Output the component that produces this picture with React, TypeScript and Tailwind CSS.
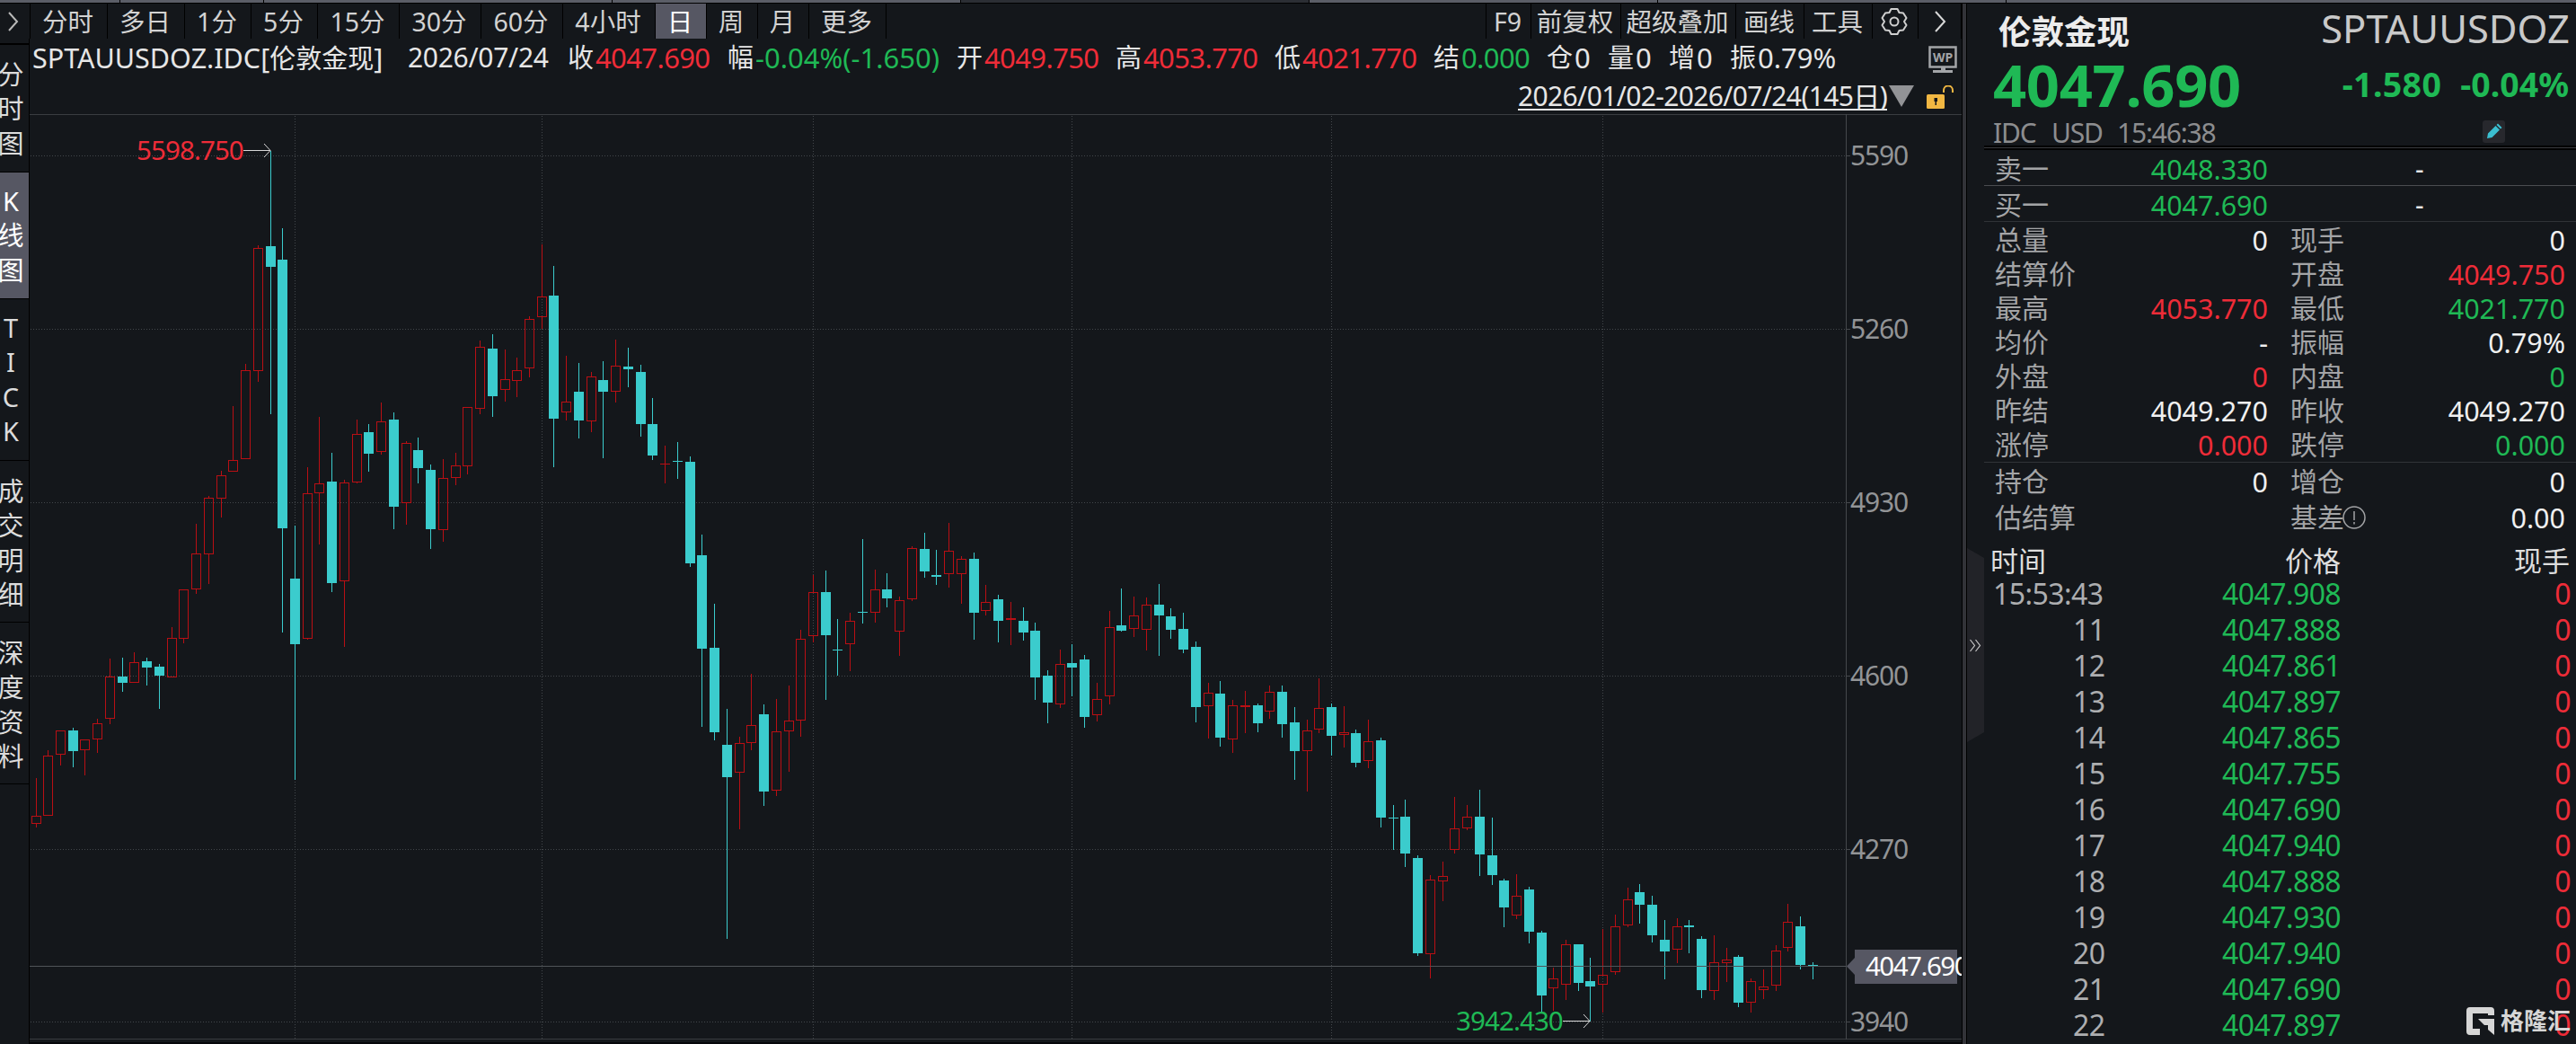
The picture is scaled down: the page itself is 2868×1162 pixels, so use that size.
import { ReactNode } from 'react'

type Candle = [dir: 'u' | 'd', high: number, top: number, bottom: number, low: number]

const RED = '#b90f14'
const CYAN = '#3bcccd'
const GRID = '#43474b'

// u = rising (hollow red), d = falling (solid cyan)
const candles: Candle[] = [
  ['u', 866, 908, 916, 921], ['u', 835, 841, 907, 907], ['u', 813, 813, 839, 852], ['d', 810, 813, 836, 854],
  ['u', 823, 823, 834, 863], ['u', 800, 805, 822, 838], ['u', 733, 753, 799, 806], ['d', 732, 753, 760, 770],
  ['u', 726, 737, 759, 759], ['d', 732, 736, 743, 763], ['d', 739, 742, 752, 789], ['u', 698, 710, 753, 753],
  ['u', 656, 656, 710, 716], ['u', 583, 616, 655, 661], ['u', 552, 554, 616, 650], ['u', 524, 529, 554, 576],
  ['u', 452, 512, 524, 524], ['u', 405, 412, 510, 510], ['u', 273, 276, 412, 425], ['d', 168, 274, 297, 461],
  ['d', 254, 289, 588, 704], ['d', 585, 644, 717, 868], ['u', 520, 549, 710, 712], ['u', 464, 538, 548, 606],
  ['d', 504, 536, 649, 659], ['u', 534, 537, 646, 720], ['u', 467, 483, 536, 538], ['d', 472, 481, 505, 525],
  ['u', 448, 469, 502, 506], ['d', 459, 467, 564, 589], ['u', 491, 493, 559, 584], ['d', 487, 501, 521, 538],
  ['d', 517, 523, 589, 611], ['u', 511, 532, 589, 603], ['u', 504, 518, 531, 540], ['u', 453, 453, 518, 528],
  ['u', 379, 386, 454, 461], ['d', 372, 388, 441, 464], ['u', 389, 422, 433, 447], ['u', 398, 412, 423, 442],
  ['u', 352, 355, 409, 420], ['u', 272, 330, 352, 366], ['d', 296, 329, 466, 520], ['u', 396, 447, 458, 468],
  ['d', 404, 436, 468, 488], ['u', 414, 419, 468, 481], ['d', 402, 423, 436, 510], ['u', 378, 407, 435, 448],
  ['d', 387, 408, 411, 431], ['d', 406, 414, 472, 486], ['d', 443, 472, 507, 512], ['u', 496, 516, 516, 538],
  ['d', 492, 513, 513, 533], ['d', 508, 514, 627, 631], ['d', 595, 618, 722, 809], ['d', 672, 721, 815, 824],
  ['d', 789, 829, 865, 1045], ['u', 820, 827, 859, 923], ['u', 750, 807, 826, 835], ['d', 784, 795, 881, 897],
  ['u', 778, 814, 879, 886], ['u', 763, 802, 813, 859], ['u', 701, 711, 801, 820], ['u', 640, 659, 707, 715],
  ['d', 635, 659, 707, 779], ['d', 689, 723, 723, 752], ['u', 682, 691, 716, 747], ['d', 600, 681, 681, 694],
  ['u', 634, 656, 681, 693], ['d', 638, 656, 666, 676], ['u', 664, 668, 702, 730], ['u', 608, 610, 666, 669],
  ['d', 593, 611, 636, 643], ['d', 612, 640, 642, 651], ['u', 582, 613, 638, 654], ['u', 619, 622, 638, 672],
  ['d', 615, 622, 682, 712], ['u', 651, 670, 679, 685], ['d', 662, 667, 691, 715], ['u', 670, 688, 689, 718],
  ['d', 676, 691, 704, 713], ['d', 693, 702, 754, 779], ['d', 746, 752, 782, 805], ['u', 723, 739, 783, 788],
  ['d', 717, 738, 743, 775], ['d', 729, 734, 798, 810], ['u', 760, 778, 795, 803], ['u', 680, 698, 774, 784],
  ['d', 655, 696, 702, 703], ['u', 664, 685, 699, 709], ['u', 665, 673, 700, 724], ['d', 650, 673, 685, 730],
  ['d', 677, 686, 701, 711], ['d', 682, 700, 723, 727], ['d', 714, 720, 787, 804], ['u', 760, 771, 785, 822],
  ['d', 758, 772, 821, 831], ['u', 779, 785, 822, 838], ['u', 769, 785, 786, 816], ['d', 783, 785, 805, 815],
  ['u', 763, 770, 791, 800], ['d', 763, 770, 806, 821], ['d', 787, 804, 836, 868], ['u', 801, 813, 835, 881],
  ['u', 755, 788, 811, 816], ['d', 783, 787, 819, 841], ['u', 786, 815, 817, 832], ['d', 812, 816, 849, 854],
  ['u', 801, 825, 846, 855], ['d', 821, 824, 910, 921], ['d', 896, 910, 910, 946], ['d', 890, 909, 950, 965],
  ['d', 952, 955, 1061, 1064], ['u', 974, 979, 1061, 1089], ['u', 959, 975, 980, 1003], ['u', 887, 922, 945, 950],
  ['u', 896, 909, 921, 924], ['d', 879, 909, 951, 975], ['d', 910, 952, 974, 985], ['d', 978, 980, 1010, 1032],
  ['u', 973, 997, 1018, 1023], ['d', 987, 990, 1037, 1050], ['d', 1036, 1038, 1108, 1127], ['u', 1077, 1089, 1099, 1125],
  ['u', 1046, 1051, 1095, 1113], ['d', 1051, 1051, 1094, 1103], ['d', 1066, 1092, 1098, 1137], ['u', 1034, 1085, 1095, 1127],
  ['u', 1018, 1031, 1081, 1085], ['u', 988, 1001, 1029, 1032], ['d', 984, 993, 1007, 1028], ['d', 997, 1007, 1041, 1049],
  ['d', 1024, 1046, 1059, 1090], ['u', 1022, 1031, 1056, 1072], ['d', 1024, 1030, 1032, 1061], ['d', 1042, 1045, 1102, 1111],
  ['u', 1041, 1071, 1102, 1113], ['u', 1055, 1068, 1071, 1093], ['d', 1063, 1065, 1116, 1121], ['u', 1089, 1092, 1115, 1127],
  ['u', 1079, 1098, 1101, 1112], ['u', 1052, 1058, 1096, 1103], ['u', 1006, 1026, 1054, 1059], ['d', 1020, 1031, 1074, 1079],
  ['d', 1071, 1074, 1074, 1090],
]

const yLabels = [
  { y: 173, label: '5590' },
  { y: 366, label: '5260' },
  { y: 559, label: '4930' },
  { y: 752, label: '4600' },
  { y: 945, label: '4270' },
  { y: 1137, label: '3940' },
]
const monthLines = [328, 603, 905, 1193, 1482, 1784]

const sideTabs = [
  { text: '分时图', cls: 'h-[142px] pt-[14px]' },
  { text: 'K线图', cls: 'h-[141px] pt-[13px] bg-[#565763] text-white' },
  { text: 'TICK', cls: 'h-[180px] pt-[13px]' },
  { text: '成交明细', cls: 'h-[180px] pt-[15px]' },
  { text: '深度资料', cls: 'h-[180px] pt-[15px]' },
]

const ticks = [
  ['15:53:43', '4047.908'],
  ['11', '4047.888'],
  ['12', '4047.861'],
  ['13', '4047.897'],
  ['14', '4047.865'],
  ['15', '4047.755'],
  ['16', '4047.690'],
  ['17', '4047.940'],
  ['18', '4047.888'],
  ['19', '4047.930'],
  ['20', '4047.940'],
  ['21', '4047.690'],
  ['22', '4047.897'],
]

function Tab({ w, active, children }: { w: string; active?: boolean; children?: ReactNode }) {
  return (
    <div
      className={`${w} h-[39px] shrink-0 pr-[2px] flex items-center justify-center border-r border-black ${
        active ? 'bg-[#565763] text-white' : ''
      }`}
    >
      {children}
    </div>
  )
}

function Info({ w, label, value, color = 'text-[#e6e6e6]', track = 'tracking-[-0.02em]' }: {
  w: string
  label: string
  value: string
  color?: string
  track?: string
}) {
  return (
    <div className={`${w} shrink-0 flex text-[#e6e6e6]`}>
      <span className="w-[31px] text-[29px]">{label}</span>
      <span className={`text-[31px] ${track} ${color}`}>{value}</span>
    </div>
  )
}

function Stat({ h = 'h-[38px]', left, lv = '', lc = 'text-[#f0f0f0]', right, rv, rc = 'text-[#f0f0f0]' }: {
  h?: string
  left: string
  lv?: string
  lc?: string
  right: ReactNode
  rv: string
  rc?: string
}) {
  return (
    <div className={`${h} pt-[2px] flex items-center pl-[12px] pr-[12px] text-[30px] leading-[38px] text-[#a3a4a6]`}>
      <span>{left}</span>
      <span className={`ml-auto text-[30.5px] ${lc}`}>{lv}</span>
      <div className="w-[331px] shrink-0 pl-[25px] flex items-center justify-between">
        <span className="flex items-center">{right}</span>
        <span className={`text-[30.5px] ${rc}`}>{rv}</span>
      </div>
    </div>
  )
}

function Chart() {
  return (
    <svg className="block" width="2151" height="1035" viewBox="33 127 2151 1035" shapeRendering="crispEdges">
      {/* frame */}
      <rect x="33" y="127" width="2151" height="1" fill="#3a3d41" />
      <rect x="33" y="1156" width="2151" height="1" fill="#3a3d41" />
      <rect x="33" y="1160" width="2151" height="2" fill="#06070a" />
      <rect x="2055" y="127" width="1" height="1030" fill="#45484c" />

      {yLabels.map(({ y, label }) => (
        <g key={label}>
          <line x1="34" x2="2055" y1={y + 0.5} y2={y + 0.5} stroke={GRID} strokeDasharray="1 2" />
          <line x1="2056" x2="2060" y1={y + 0.5} y2={y + 0.5} stroke="#45484c" />
          <text x="2060" y={y + 11} fontSize="30" letterSpacing="-1.2" fill="#929496">{label}</text>
        </g>
      ))}
      {monthLines.map((x) => (
        <line key={x} x1={x + 0.5} x2={x + 0.5} y1="129" y2="1156" stroke={GRID} strokeDasharray="1 2" />
      ))}

      {candles.map(([dir, high, top, bottom, low], i) => {
        const x = Math.floor(40 + i * 13.738)
        if (dir === 'd') {
          return (
            <g key={i} fill={CYAN}>
              <rect x={x} y={high} width="1" height={low - high} />
              <rect x={x - 5} y={top} width="11" height={Math.max(bottom - top, 1)} />
            </g>
          )
        }
        return (
          <g key={i} fill={RED}>
            <rect x={x} y={high} width="1" height={top - high} />
            <rect x={x} y={bottom} width="1" height={low - bottom} />
            <rect x={x - 5} y={top} width="11" height="1" />
            <rect x={x - 5} y={bottom} width="11" height="1" />
            <rect x={x - 5} y={top} width="1" height={bottom - top} />
            <rect x={x + 5} y={top} width="1" height={bottom - top} />
          </g>
        )
      })}

      {/* high / low marks */}
      <text x="152" y="178" fontSize="29.5" letterSpacing="-0.9" fill="#ee2c38">5598.750</text>
      <path d="M271 167.5H301M294 160l7 7.5-7 7.5" fill="none" stroke="#d8d8d8" shapeRendering="auto" />
      <text x="1621" y="1147" fontSize="29.5" letterSpacing="-0.9" fill="#1fb955">3942.430</text>
      <path d="M1740 1136.5H1770M1763 1129l7 7.5-7 7.5" fill="none" stroke="#d8d8d8" shapeRendering="auto" />

      {/* last price */}
      <rect x="33" y="1075" width="2022" height="1" fill="#505458" />
      <path d="M2056 1075.5L2065 1066V1057H2179V1095H2065V1085Z" fill="#565763" shapeRendering="auto" />
      <text x="2077" y="1086" fontSize="29.5" letterSpacing="-1.5" fill="#fff">4047.690</text>
    </svg>
  )
}

function ChartPane() {
  return (
    <div className="w-[2184px] shrink-0 flex flex-col overflow-hidden">
      {/* period tabs */}
      <div className="h-[39px] flex text-[28.5px] leading-[36px] text-[#d2d2d2]">
        <Tab w="w-[34px]">
          <svg className="ml-[-2px]" width="14" height="24" viewBox="0 0 14 24" fill="none" stroke="#b8b8b8" strokeWidth="2">
            <path d="M2 2l9 10-9 10" />
          </svg>
        </Tab>
        <Tab w="w-[86px]">分时</Tab>
        <Tab w="w-[86px]">多日</Tab>
        <Tab w="w-[74px]">1分</Tab>
        <Tab w="w-[74px]">5分</Tab>
        <Tab w="w-[91px]">15分</Tab>
        <Tab w="w-[91px]">30分</Tab>
        <Tab w="w-[91px]">60分</Tab>
        <Tab w="w-[103px]">4小时</Tab>
        <Tab w="w-[57px]" active>日</Tab>
        <Tab w="w-[57px]">周</Tab>
        <Tab w="w-[57px]">月</Tab>
        <Tab w="w-[86px]">更多</Tab>
        <div className="flex-1 border-r border-black" />
        <Tab w="w-[50px]">F9</Tab>
        <Tab w="w-[100px]">前复权</Tab>
        <Tab w="w-[128px]">超级叠加</Tab>
        <Tab w="w-[76px]">画线</Tab>
        <Tab w="w-[76px]">工具</Tab>
        <Tab w="w-[51px]">
          <svg width="32" height="32" viewBox="0 0 32 32" fill="none" stroke="#cfcfcf" strokeWidth="2" strokeLinejoin="round">
            <path d="M12.5 2h7l2 4 4.500.5 3.500 5.500-2.500 4 2.500 4-3.500 5.500-4.500.5-2 4h-7l-2-4-4.500-.5-3.500-5.500 2.500-4-2.500-4 3.500-5.500 4.500-.5z" />
            <circle cx="16" cy="16" r="4.500" />
          </svg>
        </Tab>
        <Tab w="w-[48px]">
          <svg className="ml-[2px]" width="14" height="24" viewBox="0 0 14 24" fill="none" stroke="#d8d8d8" strokeWidth="2">
            <path d="M2 1l10 11-10 11" />
          </svg>
        </Tab>
      </div>

      <div className="flex">
        {/* side tabs */}
        <div className="w-[33px] h-[1119px] shrink-0 pt-[5px] border-r border-black text-[29px] leading-[38.3px] text-[#dcdcdc]">
          <div className="border-t-2 border-black" />
          {sideTabs.map(({ text, cls }) => (
            <div key={text} className={`${cls} border-b border-black flex flex-col`}>
              {[...text].map((ch, i) => (
                <div key={i} className="w-[24px] flex justify-center">
                  <span>{ch}</span>
                </div>
              ))}
            </div>
          ))}
        </div>

        <div className="w-[2151px] flex flex-col">
          {/* quote line */}
          <div className="h-[42px] pl-[3px] flex leading-[42px]">
            <div className="w-[418px] shrink-0 text-[#e6e6e6]">
              <span className="text-[30.5px]">SPTAUUSDOZ.IDC[</span>
              <span className="text-[29px]">伦敦金现</span>
              <span className="text-[30.5px]">]</span>
            </div>
            <div className="w-[178px] shrink-0 text-[30px] tracking-[-0.01em] text-[#e6e6e6]">2026/07/24</div>
            <Info w="w-[178px]" label="收" value="4047.690" color="text-[#ee2c38]" />
            <Info w="w-[255px]" label="幅" value="-0.04%(-1.650)" color="text-[#1fb955]" track="tracking-[0em]" />
            <Info w="w-[177px]" label="开" value="4049.750" color="text-[#ee2c38]" />
            <Info w="w-[177px]" label="高" value="4053.770" color="text-[#ee2c38]" />
            <Info w="w-[177px]" label="低" value="4021.770" color="text-[#ee2c38]" />
            <Info w="w-[126px]" label="结" value="0.000" color="text-[#1fb955]" />
            <Info w="w-[68px]" label="仓" value="0" />
            <Info w="w-[68px]" label="量" value="0" />
            <Info w="w-[68px]" label="增" value="0" />
            <Info w="w-[221px]" label="振" value="0.79%" track="tracking-[0em]" />
            <svg className="mt-[8px] shrink-0" width="32" height="31" viewBox="0 0 32 31">
              <path d="M1.500 1.500h29v22h-29z" fill="none" stroke="#a3a5a8" strokeWidth="2.500" />
              <path d="M14 24h5v3h8v3H5v-3h9z" fill="#a3a5a8" />
              <text x="16" y="17.500" fontSize="14" fontWeight="700" textAnchor="middle" fill="#a3a5a8">WP</text>
            </svg>
          </div>

          {/* date range */}
          <div className="h-[42px] pr-[9px] flex justify-end items-start">
            <div className="mt-[3px] h-[35px] border-b-2 border-[#e6e6e6] text-[30px] leading-[38px] tracking-[-0.0215em] text-[#e6e6e6]">
              2026/01/02-2026/07/24(145日)
            </div>
            <svg className="ml-[2px] mt-[10px]" width="28" height="24" viewBox="0 0 28 24">
              <path d="M0 0h28L14 24z" fill="#929396" />
            </svg>
            <svg className="ml-[14px] mt-[10px]" width="30" height="26" viewBox="0 0 30 26">
              <rect x="0" y="10" width="20" height="16" rx="1.500" fill="#f1b742" />
              <path d="M19 8V5.500a5 5 0 0 1 10 0V8" fill="none" stroke="#f1b742" strokeWidth="2" />
              <path d="M8.500 14h3.500v4h-1v4H9.500v-4h-1z" fill="#14171b" />
            </svg>
          </div>

          <Chart />
        </div>
      </div>
    </div>
  )
}

function QuotePane() {
  return (
    <div className="w-[659px] flex flex-col">
      <div className="h-[62px] pl-[16px] pr-[7px] flex justify-between">
        <span className="text-[36.500px] leading-[63px] font-bold text-[#ececec]">伦敦金现</span>
        <span className="text-[43.500px] leading-[55px] text-[#c9c9c9]">SPTAUUSDOZ</span>
      </div>
      <div className="h-[64px] pl-[10px] pr-[8px] flex justify-between font-bold text-[#1fb955]">
        <span className="text-[65px] leading-[56px] tracking-[-0.005em]">4047.690</span>
        <span className="text-[37.500px] leading-[56px] flex gap-[21px]">
          <span className="tracking-[0.01em]">-1.580</span>
          <span>-0.04%</span>
        </span>
      </div>
      <div className="h-[32px] pl-[10px] pr-[79px] flex items-center text-[30px] leading-[32px] tracking-[-0.04em] text-[#8c8d8f]">
        <span className="w-[65px] pt-[4px]">IDC</span>
        <span className="w-[73px] pt-[4px]">USD</span>
        <span className="pt-[4px]">15:46:38</span>
        <span className="ml-auto w-[25px] h-[25px] rounded-[3px] bg-[#27282d] flex items-center justify-center">
          <svg width="18" height="18" viewBox="0 0 18 18" fill="#3bbfd0">
            <path d="M1 17l1-5.500L10.500 3l4.500 4.500L6.500 16zM11.500 2L13 .5l4.500 4.500L16 6.500z" />
          </svg>
        </span>
      </div>
      <div className="h-[5px] border-y-2 border-black bg-[#3a3c40]" />

      {/* bid / ask */}
      <div className="h-[40px] pt-[2px] border-b border-[#4a4c50] flex items-center pl-[12px] text-[30px] leading-[36px]">
        <span className="w-[178px] text-[#a3a4a6]">卖一</span>
        <span className="w-[126px] flex justify-end text-[30.5px] text-[#1fb955]">4048.330</span>
        <span className="ml-[164px] text-[#e6e6e6]">-</span>
      </div>
      <div className="h-[40px] pt-[2px] border-b border-[#303337] flex items-center pl-[12px] text-[30px] leading-[36px]">
        <span className="w-[178px] text-[#a3a4a6]">买一</span>
        <span className="w-[126px] flex justify-end text-[30.5px] text-[#1fb955]">4047.690</span>
        <span className="ml-[164px] text-[#e6e6e6]">-</span>
      </div>

      <Stat left="总量" lv="0" right="现手" rv="0" />
      <Stat left="结算价" right="开盘" rv="4049.750" rc="text-[#ee2c38]" />
      <Stat left="最高" lv="4053.770" lc="text-[#ee2c38]" right="最低" rv="4021.770" rc="text-[#1fb955]" />
      <Stat left="均价" lv="-" right="振幅" rv="0.79%" />
      <Stat left="外盘" lv="0" lc="text-[#ee2c38]" right="内盘" rv="0" rc="text-[#1fb955]" />
      <Stat left="昨结" lv="4049.270" right="昨收" rv="4049.270" />
      <Stat left="涨停" lv="0.000" lc="text-[#ee2c38]" right="跌停" rv="0.000" rc="text-[#1fb955]" />
      <div className="h-[2px] border-b border-[#303337]" />
      <Stat h="h-[40px]" left="持仓" lv="0" right="增仓" rv="0" />
      <Stat
        h="h-[40px]"
        left="估结算"
        right={
          <>
            基差
            <svg className="ml-[-2px]" width="26" height="26" viewBox="0 0 26 26" fill="none" stroke="#a3a4a6" strokeWidth="1.500">
              <circle cx="13" cy="13" r="12" />
              <path d="M13 6v10M13 18v2.500" />
            </svg>
          </>
        }
        rv="0.00"
      />

      {/* ticks */}
      <div className="h-[46px] pt-[6px] pl-[7px] pr-[7px] flex text-[31px] leading-[46px] text-[#dedede]">
        <span className="w-[328px]">时间</span>
        <span>价格</span>
        <span className="ml-auto">现手</span>
      </div>
      {ticks.map(([time, price], i) => (
        <div key={i} className="h-[40px] shrink-0 pl-[10px] pr-[6px] flex text-[32px] leading-[40px] tracking-[-0.018em]">
          <span className={`w-[255px] text-[#adaeb0] ${i > 0 ? 'pl-[89px]' : ''}`}>{time}</span>
          <span className="text-[#1fb955]">{price}</span>
          <span className="ml-auto text-[#ee2c38]">0</span>
        </div>
      ))}
    </div>
  )
}

export default function App() {
  return (
    <div className="relative w-[2868px] h-[1162px] overflow-hidden flex flex-col bg-[#14171b] font-['Noto_Sans','Noto_Sans_CJK_SC',sans-serif] whitespace-nowrap">
      {/* window strip */}
      <div className="h-[4px] shrink-0 flex border-b border-black bg-[#5b5e67]">
        <div className="w-[134px] border-r border-black" />
        <div className="w-[160px] border-r border-black" />
        <div className="w-[388px] border-r border-black" />
        <div className="w-[387px]" />
        <div className="w-[389px] border-x border-black bg-[#2b2e34]" />
        <div className="w-[388px] border-r border-black" />
        <div className="w-[388px] border-r border-black" />
      </div>

      <div className="flex h-[1158px]">
        <ChartPane />
        <div className="w-[6px] shrink-0 border-x border-black bg-[#323338]" />
        <div className="w-[19px] shrink-0 pt-[606px]">
          <svg width="19" height="216" viewBox="0 0 19 216">
            <path d="M0 0l19 11v194L0 216z" fill="#222328" />
            <path d="M3.500 102l5 6.500-5 6.500M9.500 102l5 6.500-5 6.500" fill="none" stroke="#c8c8c8" strokeWidth="1.200" />
          </svg>
        </div>
        <QuotePane />
      </div>

      {/* watermark */}
      <div className="absolute left-[2746px] top-[1118px] flex items-center gap-[7px] text-[26px] leading-[36px] font-bold text-[#d6d6d6]">
        <svg width="31" height="31" viewBox="0 0 31 31" fill="#d6d6d6">
          <path d="M4 0h23q4 0 4 4v5h-7V7H7v17h8v7H4q-4 0-4-4V4q0-4 4-4zM13 13h18v18l-7-6v-5h-4z" />
        </svg>
        <span>格隆汇</span>
      </div>
    </div>
  )
}
